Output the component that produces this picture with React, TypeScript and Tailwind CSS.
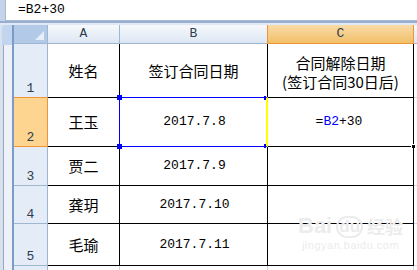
import React from "react";

const mono = "font-['Liberation_Mono','Noto_Sans_CJK_SC',monospace]";
const cjk = "font-['Noto_Sans_CJK_SC','Noto_Sans',sans-serif]";

const rows = [
  { n: "1", name: "姓名", date: "签订合同日期" },
  { n: "2", name: "王玉", date: "2017.7.8" },
  { n: "3", name: "贾二", date: "2017.7.9" },
  { n: "4", name: "龚玥", date: "2017.7.10" },
  { n: "5", name: "毛瑜", date: "2017.7.11" },
];

function RowHead({ n, active, preActive }: { n: string; active?: boolean; preActive?: boolean }) {
  return (
    <div
      className={`flex items-end justify-center pb-[1px] text-[13px] leading-[14px] text-[#2b3d4f] border-r border-b ${mono} ${
        active
          ? "bg-[#fdd590] border-r-[#f29436] border-b-[#f29436]"
          : preActive
            ? "bg-[#e4ecf7] border-r-[#9eb6ce] border-b-[#f29436]"
            : "bg-[#e4ecf7] border-[#9eb6ce]"
      }`}
    >
      {n}
    </div>
  );
}

export default function App() {
  return (
    <div className="relative w-[417px] h-[270px] overflow-hidden bg-[#dbe5f1]">
      {/* formula bar */}
      <div className="flex h-[21px]">
        <div className="w-[5px] bg-[#c4d3e7]" />
        <div className={`flex-1 flex items-center pl-[12px] bg-white border-l border-b border-[#a7b9d1] text-[13px] text-black ${mono}`}>
          =B2+30
        </div>
      </div>
      <div className="h-[2px] bg-[#98afd0]" />
      <div className="h-[2px] bg-[#dfe8f4]" />

      <div className="flex h-[245px]">
        {/* left task strip */}
        <div className="flex w-[14px]">
          <div className="flex-1 flex flex-col bg-[#d6e2f0]">
            <div className="h-[20px] ml-[2px] rounded-tl-[3px] bg-[#c3d5ee]" />
            <div className="flex-1 ml-[3px] border-l border-[#9aa8b8] bg-[#eef2f8]" />
          </div>
          <div className="w-[2px] bg-[#7a9cc9]" />
        </div>

        {/* sheet */}
        <div className="flex-1 grid grid-cols-[34px_72px_148px_146px_1fr] grid-rows-[19px_54px_49px_39px_38px_42px_1fr] bg-white">
          {/* header row */}
          <div className="relative bg-[#b3c9e8] border-r border-b border-[#9eb6ce]">
            <div className="absolute right-[3px] bottom-[3px] w-0 h-0 border-l-[9px] border-l-transparent border-b-[9px] border-b-[#e6eef9]" />
          </div>
          <div className={`flex items-center justify-center bg-gradient-to-b from-[#f7f9fc] to-[#dce6f3] border-r border-b border-[#9eb6ce] text-[13px] text-[#2b3d4f] ${mono}`}>
            A
          </div>
          <div className={`flex items-center justify-center bg-gradient-to-b from-[#f7f9fc] to-[#dce6f3] border-r border-b border-[#9eb6ce] border-r-[#f29436] text-[13px] text-[#2b3d4f] ${mono}`}>
            B
          </div>
          <div className={`flex items-center justify-center bg-gradient-to-b from-[#f9dba6] to-[#f1c068] border-r border-b border-[#f29436] text-[13px] text-[#2b3d4f] ${mono}`}>
            C
          </div>
          <div className="bg-gradient-to-b from-[#f7f9fc] to-[#dce6f3] border-b border-[#9eb6ce]" />

          {rows.map((r, i) => (
            <React.Fragment key={r.n}>
              <RowHead n={r.n} active={i === 1} preActive={i === 0} />
              <div className={`flex items-center justify-center border-r border-b border-black text-[15px] leading-[18px] text-black ${cjk}`}>
                {r.name}
              </div>
              <div
                className={`relative flex items-center justify-center border-r border-b border-black text-black ${
                  i === 0 ? `text-[15px] leading-[18px] ${cjk}` : `text-[13px] pl-[2px] ${mono}`
                }`}
              >
                {r.date}
                {i === 1 && (
                  <>
                    <div className="absolute -left-px -top-px -right-px -bottom-px border-t border-b border-l border-[#0000ff] border-r-2 border-r-[#ffff00]" />
                    <div className="absolute left-[-3px] top-[-3px] w-[5px] h-[5px] bg-[#0000ff]" />
                    <div className="absolute left-[-3px] bottom-[-3px] w-[5px] h-[5px] bg-[#0000ff]" />
                    <div className="absolute right-[1px] top-[-2px] w-[2px] h-[4px] bg-[#0000ff]" />
                    <div className="absolute right-[1px] bottom-[-2px] w-[2px] h-[4px] bg-[#0000ff]" />
                  </>
                )}
              </div>
              <div className="relative flex items-center justify-center border-r border-b border-black text-black">
                {i === 0 && (
                  <div className={`flex flex-col items-center text-[15px] leading-[19px] pt-[3px] ${cjk}`}>
                    <span>合同解除日期</span>
                    <span>(签订合同30日后)</span>
                  </div>
                )}
                {i === 1 && (
                  <>
                    <span className={`text-[13px] pr-[3px] ${mono}`}>
                      =<span className="text-[#0000ff]">B2</span>+30
                    </span>
                    <div className="absolute right-[-3px] bottom-[-3px] w-[5px] h-[5px] bg-black border border-white" />
                  </>
                )}
              </div>
              <div className="border-b border-[#d0d7e5]" />
            </React.Fragment>
          ))}

          {/* row 6 */}
          <div className="bg-[#e4ecf7] border-r border-[#9eb6ce]" />
          <div className="border-r border-[#d0d7e5]" />
          <div className="border-r border-[#d0d7e5]" />
          <div className="border-r border-[#d0d7e5]" />
          <div />
        </div>
      </div>

      {/* watermark */}
      <div className="absolute left-[298px] top-[214px] flex flex-col items-center text-[#ececec] pointer-events-none">
        <div className="flex items-end gap-[4px] font-['Liberation_Sans',sans-serif] font-bold text-[22px] leading-[24px]">
          <span>Bai</span>
          <span className="rounded-full border-2 border-[#ececec] px-[1px] text-[17px] leading-[18px]">du</span>
          <span className={`text-[18px] ${cjk}`}>经验</span>
        </div>
        <span className="font-['Liberation_Sans',sans-serif] text-[11px] leading-[14px] tracking-[0.5px]">jingyan.baidu.com</span>
      </div>
    </div>
  );
}
